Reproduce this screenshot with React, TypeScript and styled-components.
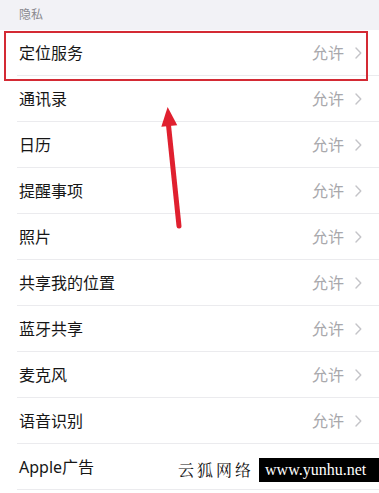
import React from "react";
import styled, { createGlobalStyle } from "styled-components";

const GlobalStyle = createGlobalStyle`
  html, body {
    margin: 0;
    padding: 0;
    background: #ffffff;
  }
  body {
    font-family: "Noto Sans", "Noto Sans CJK SC", sans-serif;
    -webkit-font-smoothing: antialiased;
  }
`;

const items = [
  "定位服务",
  "通讯录",
  "日历",
  "提醒事项",
  "照片",
  "共享我的位置",
  "蓝牙共享",
  "麦克风",
  "语音识别",
  "Apple广告",
];

export default function App() {
  return (
    <>
      <GlobalStyle />
      <Page>
        <SectionHeader>隐私</SectionHeader>
        <List>
          {items.map((label, i) => (
            <Row key={label}>
              <Label>{label}</Label>
              {i < items.length - 1 && (
                <Value>
                  允许
                  <Chevron viewBox="0 0 7 12">
                    <path d="M1 1 L5.8 6 L1 11" />
                  </Chevron>
                </Value>
              )}
            </Row>
          ))}
        </List>

        <Highlight />

        <Arrow viewBox="0 0 40 130">
          <path d="M20.5 18 L31 119" />
          <polygon points="8,0 0,19 16,19" transform="translate(12.5,0) rotate(-5 8 10)" />
        </Arrow>

        <Watermark>
          <WatermarkName>云狐网络</WatermarkName>
          <WatermarkUrl>www.yunhu.net</WatermarkUrl>
        </Watermark>
      </Page>
    </>
  );
}

const Page = styled.div`
  position: relative;
  width: 379px;
  height: 493px;
  overflow: hidden;
  background: #ffffff;
`;

const SectionHeader = styled.div`
  height: 30px;
  box-sizing: border-box;
  padding: 7px 0 0 19px;
  background: #f2f2f6;
  color: #8a8a8f;
  font-size: 12px;
  line-height: 16px;
`;

const List = styled.div`
  display: flex;
  flex-direction: column;
`;

const Row = styled.div`
  position: relative;
  height: 46px;
  display: flex;
  align-items: center;
  justify-content: space-between;
  padding: 0 17px 0 19px;

  &::after {
    content: "";
    position: absolute;
    left: 17px;
    right: 0;
    bottom: 0;
    height: 1px;
    background: #ebebee;
  }
`;

const Label = styled.span`
  color: #161616;
  font-size: 16px;
  line-height: 22px;
`;

const Value = styled.span`
  display: flex;
  align-items: center;
  gap: 11px;
  color: #a8a8ac;
  font-size: 16px;
  line-height: 22px;
`;

const Chevron = styled.svg`
  width: 7px;
  height: 12px;
  fill: none;
  stroke: #c4c4c8;
  stroke-width: 1.4;
  stroke-linecap: round;
  stroke-linejoin: round;
`;

const Highlight = styled.div`
  position: absolute;
  left: 4px;
  top: 31px;
  width: 364px;
  height: 50px;
  box-sizing: border-box;
  border: 2px solid #d42a34;
  pointer-events: none;
`;

const Arrow = styled.svg`
  position: absolute;
  left: 148px;
  top: 107px;
  width: 40px;
  height: 130px;
  overflow: visible;

  path {
    stroke: #e0202f;
    stroke-width: 5;
    stroke-linecap: round;
    fill: none;
  }

  polygon {
    fill: #e0202f;
  }
`;

const Watermark = styled.div`
  position: absolute;
  left: 178px;
  top: 458px;
  display: flex;
  align-items: center;
  gap: 5px;
  white-space: nowrap;
`;

const WatermarkName = styled.span`
  font-family: "Noto Serif CJK SC", "Liberation Serif", "Noto Sans CJK SC", serif;
  font-size: 16px;
  letter-spacing: 3px;
  color: #111111;
  line-height: 24px;
  white-space: nowrap;
`;

const WatermarkUrl = styled.span`
  display: block;
  width: 121px;
  height: 24px;
  background: #000000;
  color: #ffffff;
  font-family: "Liberation Serif", "DejaVu Serif", serif;
  font-size: 16px;
  line-height: 24px;
  padding-left: 6px;
  box-sizing: border-box;
  white-space: nowrap;
`;
